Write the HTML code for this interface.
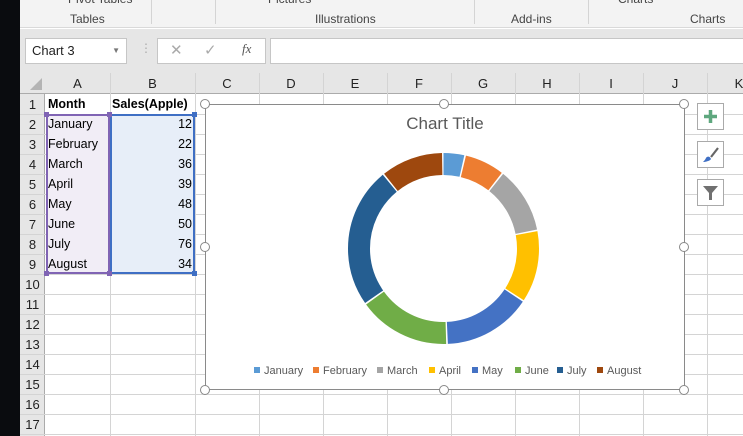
<!DOCTYPE html>
<html><head><style>
*{margin:0;padding:0;box-sizing:border-box}
body{width:743px;height:436px;overflow:hidden;position:relative;background:#fff;font-family:"Liberation Sans",sans-serif;}
.a{position:absolute}
.t{font-size:12.5px;color:#000;position:absolute;line-height:22px}
.vl{position:absolute;width:1px;background:#d4d4d4}
.hl{position:absolute;height:1px;background:#d4d4d4}
.ch{position:absolute;top:73px;height:21px;font-size:13px;text-align:center;line-height:22px;color:#222}
.rh{position:absolute;left:20px;width:25px;font-size:13px;text-align:center;color:#222;line-height:21px}
.hd{position:absolute;width:10px;height:10px;border:1.5px solid #888;border-radius:50%;background:#fff}
.lg{position:absolute;top:364px;font-size:11px;color:#595959;line-height:14px}
.lg i{display:inline-block;width:6px;height:6px;margin-right:4px;vertical-align:1px}
</style></head><body>
<div class="a" style="left:0;top:0;width:20px;height:436px;background:#0a0c0f"></div>
<div class="a" style="left:20px;top:0;width:723px;height:28px;background:#f3f3f3;border-bottom:1px solid #d9d9d9"></div>
<div class="a" style="left:68px;top:-8px;font-size:12px;color:#444">Pivot Tables</div>
<div class="a" style="left:268px;top:-8px;font-size:12px;color:#444">Pictures</div>
<div class="a" style="left:618px;top:-8px;font-size:12px;color:#444">Charts</div>
<div class="a" style="left:70px;top:12px;font-size:12px;color:#444">Tables</div>
<div class="a" style="left:315px;top:12px;font-size:12px;color:#444">Illustrations</div>
<div class="a" style="left:511px;top:12px;font-size:12px;color:#444">Add-ins</div>
<div class="a" style="left:690px;top:12px;font-size:12px;color:#444">Charts</div>
<div class="a" style="left:151px;top:0;width:1px;height:24px;background:#d4d4d4"></div>
<div class="a" style="left:215px;top:0;width:1px;height:24px;background:#d4d4d4"></div>
<div class="a" style="left:474px;top:0;width:1px;height:24px;background:#d4d4d4"></div>
<div class="a" style="left:588px;top:0;width:1px;height:24px;background:#d4d4d4"></div>
<div class="a" style="left:20px;top:29px;width:723px;height:44px;background:#e6e6e6"></div>
<div class="a" style="left:25px;top:38px;width:102px;height:26px;background:#fff;border:1px solid #c6c6c6;font-size:13px;line-height:24px;padding-left:6px;color:#222">Chart 3<span style="position:absolute;right:6px;top:0;font-size:8px;color:#777">▼</span></div>
<div class="a" style="left:140px;top:41px;font-size:12px;color:#aaa">⋮</div>
<div class="a" style="left:157px;top:38px;width:109px;height:26px;background:#fff;border:1px solid #c6c6c6"></div>
<div class="a" style="left:170px;top:41px;font-size:15px;color:#aaa">✕</div>
<div class="a" style="left:204px;top:41px;font-size:15px;color:#aaa">✓</div>
<div class="a" style="left:242px;top:41px;font-size:13px;color:#555;font-family:'Liberation Serif',serif;font-style:italic">fx</div>
<div class="a" style="left:270px;top:38px;width:480px;height:26px;background:#fff;border:1px solid #c6c6c6"></div>
<div class="a" style="left:20px;top:73px;width:723px;height:21px;background:#e6e6e6;border-bottom:1px solid #ababab"></div>
<div class="a" style="left:20px;top:94px;width:25px;height:342px;background:#e6e6e6;border-right:1px solid #ababab"></div>
<svg class="a" style="left:30px;top:78px" width="13" height="13"><polygon points="12,0 12,12 0,12" fill="#b4b4b4"/></svg>
<div class="ch" style="left:45px;width:65px">A</div><div class="ch" style="left:110px;width:85px">B</div><div class="ch" style="left:195px;width:64px">C</div><div class="ch" style="left:259px;width:64px">D</div><div class="ch" style="left:323px;width:64px">E</div><div class="ch" style="left:387px;width:64px">F</div><div class="ch" style="left:451px;width:64px">G</div><div class="ch" style="left:515px;width:64px">H</div><div class="ch" style="left:579px;width:64px">I</div><div class="ch" style="left:643px;width:64px">J</div><div class="ch" style="left:707px;width:64px">K</div>
<div class="vl" style="left:110px;top:73px;height:363px"></div><div class="vl" style="left:195px;top:73px;height:363px"></div><div class="vl" style="left:259px;top:73px;height:363px"></div><div class="vl" style="left:323px;top:73px;height:363px"></div><div class="vl" style="left:387px;top:73px;height:363px"></div><div class="vl" style="left:451px;top:73px;height:363px"></div><div class="vl" style="left:515px;top:73px;height:363px"></div><div class="vl" style="left:579px;top:73px;height:363px"></div><div class="vl" style="left:643px;top:73px;height:363px"></div><div class="vl" style="left:707px;top:73px;height:363px"></div>
<div class="hl" style="left:20px;top:114px;width:723px"></div><div class="hl" style="left:20px;top:134px;width:723px"></div><div class="hl" style="left:20px;top:154px;width:723px"></div><div class="hl" style="left:20px;top:174px;width:723px"></div><div class="hl" style="left:20px;top:194px;width:723px"></div><div class="hl" style="left:20px;top:214px;width:723px"></div><div class="hl" style="left:20px;top:234px;width:723px"></div><div class="hl" style="left:20px;top:254px;width:723px"></div><div class="hl" style="left:20px;top:274px;width:723px"></div><div class="hl" style="left:20px;top:294px;width:723px"></div><div class="hl" style="left:20px;top:314px;width:723px"></div><div class="hl" style="left:20px;top:334px;width:723px"></div><div class="hl" style="left:20px;top:354px;width:723px"></div><div class="hl" style="left:20px;top:374px;width:723px"></div><div class="hl" style="left:20px;top:394px;width:723px"></div><div class="hl" style="left:20px;top:414px;width:723px"></div><div class="hl" style="left:20px;top:434px;width:723px"></div>
<div class="rh" style="top:94px">1</div><div class="rh" style="top:114px">2</div><div class="rh" style="top:134px">3</div><div class="rh" style="top:154px">4</div><div class="rh" style="top:174px">5</div><div class="rh" style="top:194px">6</div><div class="rh" style="top:214px">7</div><div class="rh" style="top:234px">8</div><div class="rh" style="top:254px">9</div><div class="rh" style="top:274px">10</div><div class="rh" style="top:294px">11</div><div class="rh" style="top:314px">12</div><div class="rh" style="top:334px">13</div><div class="rh" style="top:354px">14</div><div class="rh" style="top:374px">15</div><div class="rh" style="top:394px">16</div><div class="rh" style="top:414px">17</div>
<div class="a" style="left:46px;top:114px;width:64px;height:160px;background:#f1edf6;border:2px solid #8064b4"></div>
<div class="a" style="left:110px;top:114px;width:85px;height:160px;background:#e7eef8;border:2px solid #3f6fc4"></div>
<div class="a" style="left:44px;top:112px;width:5px;height:5px;background:#8064b4"></div><div class="a" style="left:107px;top:112px;width:5px;height:5px;background:#8064b4"></div><div class="a" style="left:44px;top:271px;width:5px;height:5px;background:#8064b4"></div><div class="a" style="left:107px;top:271px;width:5px;height:5px;background:#8064b4"></div><div class="a" style="left:192px;top:112px;width:5px;height:5px;background:#3f6fc4"></div><div class="a" style="left:192px;top:271px;width:5px;height:5px;background:#3f6fc4"></div>
<div class="t" style="left:48px;top:93px;font-weight:bold">Month</div><div class="t" style="left:112px;top:93px;font-weight:bold">Sales(Apple)</div>
<div class="t" style="left:48px;top:113px">January</div><div class="t" style="left:48px;top:133px">February</div><div class="t" style="left:48px;top:153px">March</div><div class="t" style="left:48px;top:173px">April</div><div class="t" style="left:48px;top:193px">May</div><div class="t" style="left:48px;top:213px">June</div><div class="t" style="left:48px;top:233px">July</div><div class="t" style="left:48px;top:253px">August</div>
<div class="t" style="left:150px;width:42px;text-align:right;top:113px">12</div><div class="t" style="left:150px;width:42px;text-align:right;top:133px">22</div><div class="t" style="left:150px;width:42px;text-align:right;top:153px">36</div><div class="t" style="left:150px;width:42px;text-align:right;top:173px">39</div><div class="t" style="left:150px;width:42px;text-align:right;top:193px">48</div><div class="t" style="left:150px;width:42px;text-align:right;top:213px">50</div><div class="t" style="left:150px;width:42px;text-align:right;top:233px">76</div><div class="t" style="left:150px;width:42px;text-align:right;top:253px">34</div>
<div class="a" style="left:205px;top:104px;width:480px;height:286px;background:#fff;border:1px solid #8a8a8a"></div>
<div class="a" style="left:205px;top:114px;width:480px;text-align:center;font-size:17px;color:#595959">Chart Title</div>
<svg class="a" style="left:0;top:0" width="743" height="436">
<g fill="none" stroke-width="22" transform="rotate(-90 443.5 248.5)">
<circle cx="443.5" cy="248.5" r="84.5" stroke="#5b9bd5" stroke-dasharray="18.6 600" stroke-dashoffset="0"/>
<circle cx="443.5" cy="248.5" r="84.5" stroke="#ed7d31" stroke-dasharray="35.35 600" stroke-dashoffset="-20.1"/>
<circle cx="443.5" cy="248.5" r="84.5" stroke="#a5a5a5" stroke-dasharray="58.8 600" stroke-dashoffset="-56.95"/>
<circle cx="443.5" cy="248.5" r="84.5" stroke="#ffc000" stroke-dasharray="63.8 600" stroke-dashoffset="-117.24"/>
<circle cx="443.5" cy="248.5" r="84.5" stroke="#4472c4" stroke-dasharray="78.9 600" stroke-dashoffset="-182.56"/>
<circle cx="443.5" cy="248.5" r="84.5" stroke="#70ad47" stroke-dasharray="82.2 600" stroke-dashoffset="-262.95"/>
<circle cx="443.5" cy="248.5" r="84.5" stroke="#255e91" stroke-dasharray="125.8 600" stroke-dashoffset="-346.69"/>
<circle cx="443.5" cy="248.5" r="84.5" stroke="#9e480e" stroke-dasharray="55.4 600" stroke-dashoffset="-473.98"/>
</g></svg>
<div class="lg" style="left:254px"><i style="background:#5b9bd5"></i>January</div>
<div class="lg" style="left:313px"><i style="background:#ed7d31"></i>February</div>
<div class="lg" style="left:377px"><i style="background:#a5a5a5"></i>March</div>
<div class="lg" style="left:429px"><i style="background:#ffc000"></i>April</div>
<div class="lg" style="left:472px"><i style="background:#4472c4"></i>May</div>
<div class="lg" style="left:515px"><i style="background:#70ad47"></i>June</div>
<div class="lg" style="left:557px"><i style="background:#255e91"></i>July</div>
<div class="lg" style="left:597px"><i style="background:#9e480e"></i>August</div>
<div class="hd" style="left:200px;top:99px"></div><div class="hd" style="left:439px;top:99px"></div><div class="hd" style="left:679px;top:99px"></div>
<div class="hd" style="left:200px;top:242px"></div><div class="hd" style="left:679px;top:242px"></div>
<div class="hd" style="left:200px;top:385px"></div><div class="hd" style="left:439px;top:385px"></div><div class="hd" style="left:679px;top:385px"></div>
<div class="a" style="left:697px;top:103px;width:27px;height:27px;background:#fff;border:1px solid #aaa"></div>
<svg class="a" style="left:697px;top:103px" width="27" height="27"><path d="M13.5 7v13M7 13.5h13" stroke="#5ea77e" stroke-width="3.5"/></svg>
<div class="a" style="left:697px;top:141px;width:27px;height:27px;background:#fff;border:1px solid #aaa"></div>
<svg class="a" style="left:697px;top:141px" width="27" height="27"><path d="M14 16l7-9" stroke="#666" stroke-width="2.2"/><path d="M6 21c2 0 7-1 8-3-1-3-4-3-5-1-1 2-2 3-3 4z" fill="#3f6fc4"/></svg>
<div class="a" style="left:697px;top:179px;width:27px;height:27px;background:#fff;border:1px solid #aaa"></div>
<svg class="a" style="left:697px;top:179px" width="27" height="27"><path d="M6 7h15l-6 7v7h-3v-7z" fill="#707070"/></svg>
</body></html>
